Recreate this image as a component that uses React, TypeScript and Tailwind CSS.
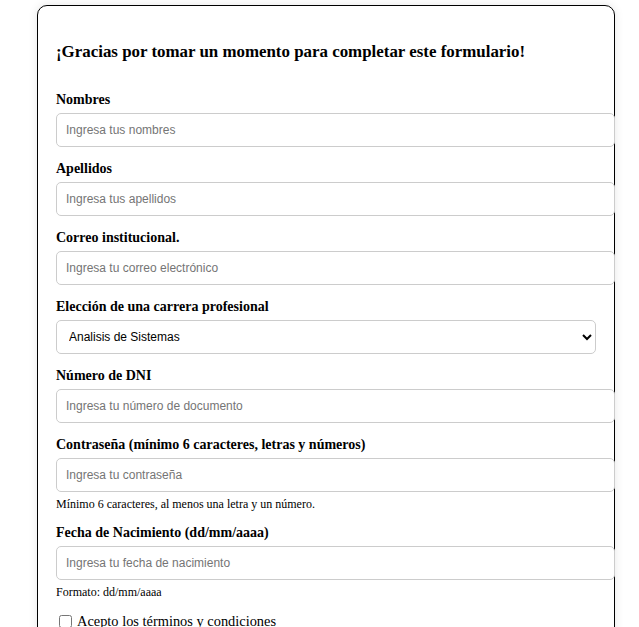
import { useState } from 'react';

const serif = "font-['Liberation_Serif','Times_New_Roman',serif]";

interface Campo {
  id: string;
  label: string;
  placeholder: string;
  type?: string;
  ayuda?: string;
}

const campos: Campo[] = [
  { id: 'nombres', label: 'Nombres', placeholder: 'Ingresa tus nombres' },
  { id: 'apellidos', label: 'Apellidos', placeholder: 'Ingresa tus apellidos' },
  { id: 'correo', label: 'Correo institucional.', placeholder: 'Ingresa tu correo electrónico', type: 'email' },
];

const camposFinales: Campo[] = [
  { id: 'dni', label: 'Número de DNI', placeholder: 'Ingresa tu número de documento' },
  {
    id: 'password',
    label: 'Contraseña (mínimo 6 caracteres, letras y números)',
    placeholder: 'Ingresa tu contraseña',
    type: 'password',
    ayuda: 'Mínimo 6 caracteres, al menos una letra y un número.',
  },
  {
    id: 'fecha',
    label: 'Fecha de Nacimiento (dd/mm/aaaa)',
    placeholder: 'Ingresa tu fecha de nacimiento',
    ayuda: 'Formato: dd/mm/aaaa',
  },
];

function CampoTexto({ campo }: { campo: Campo }) {
  return (
    <div className="mb-[13px]">
      <label htmlFor={campo.id} className="block text-[14px] font-bold leading-[18px] mb-[4px]">
        {campo.label}
      </label>
      <input
        id={campo.id}
        type={campo.type ?? 'text'}
        placeholder={campo.placeholder}
        className="block w-[559px] h-[34px] pl-[9px] pr-[10px] border border-[#cccccc] rounded-[5px] bg-white text-[12px] font-['Liberation_Sans',Arial,sans-serif] placeholder:text-[#757575] outline-none"
      />
      {campo.ayuda && (
        <small className="block mt-[5px] mb-[3px] text-[12px] leading-[14px]">{campo.ayuda}</small>
      )}
    </div>
  );
}

export default function App() {
  const [carrera, setCarrera] = useState('sistemas');

  return (
    <div className={`min-h-screen bg-white pt-[5px] text-black ${serif}`}>
      <form className="ml-[37px] w-[578px] border border-black rounded-[10px] bg-white shadow-[0_0_10px_rgba(0,0,0,0.1)] px-[18px] pt-[35px] pb-[20px]">
        <h3 className="text-[16.9px] font-bold leading-[22px] mb-[28px]">
          ¡Gracias por tomar un momento para completar este formulario!
        </h3>

        {campos.map((c) => (
          <CampoTexto key={c.id} campo={c} />
        ))}

        <div className="mb-[13px]">
          <label htmlFor="carrera" className="block text-[14px] font-bold leading-[18px] mb-[4px]">
            Elección de una carrera profesional
          </label>
          <select
            id="carrera"
            value={carrera}
            onChange={(e) => setCarrera(e.target.value)}
            className="block w-full h-[34px] pl-[8px] pr-[10px] border border-[#cccccc] rounded-[5px] bg-white text-[12px] font-['Liberation_Sans',Arial,sans-serif]"
          >
            <option value="sistemas">Analisis de Sistemas</option>
            <option value="contabilidad">Contabilidad</option>
            <option value="enfermeria">Enfermería</option>
          </select>
        </div>

        {camposFinales.map((c) => (
          <CampoTexto key={c.id} campo={c} />
        ))}

        <div className="flex items-center mt-[4px] leading-[18px] text-[14.4px]">
          <input type="checkbox" id="terminos" className="ml-[3px] mr-[5px] w-[13px] h-[13px]" />
          <label htmlFor="terminos">Acepto los términos y condiciones</label>
        </div>
      </form>
    </div>
  );
}
